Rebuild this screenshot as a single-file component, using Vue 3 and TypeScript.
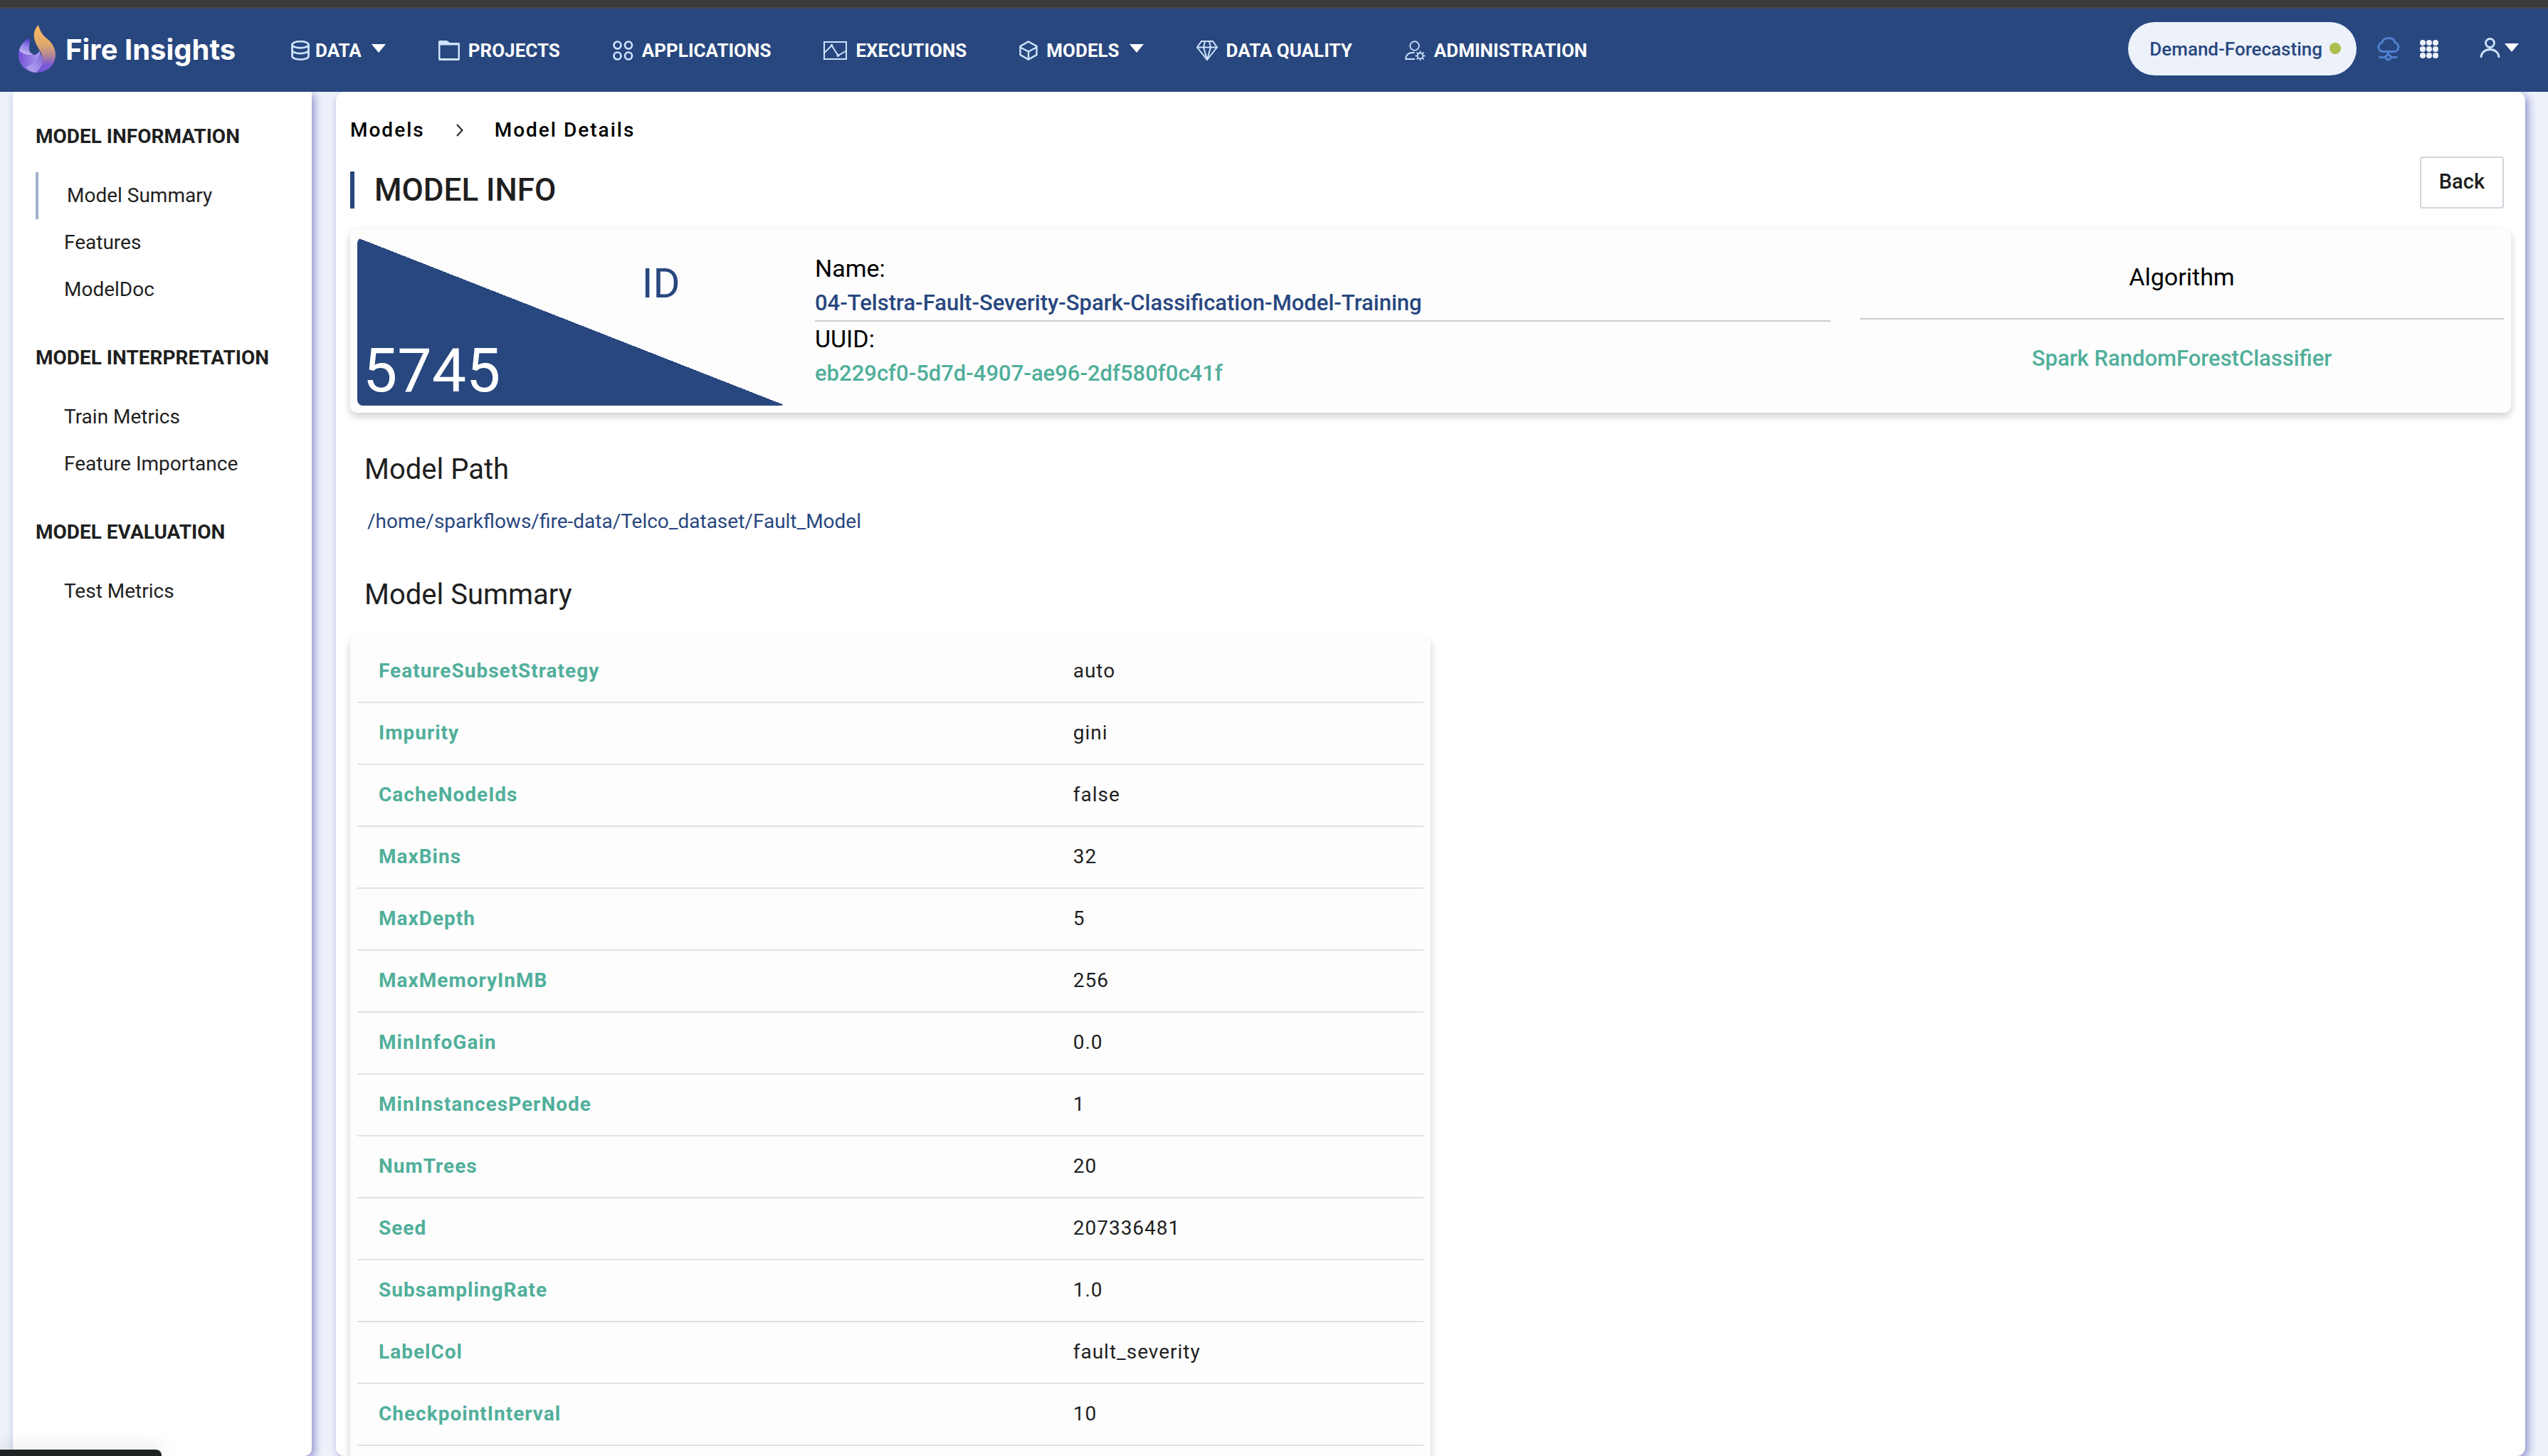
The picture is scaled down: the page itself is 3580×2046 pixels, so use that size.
<script setup lang="ts">
interface NavItem {
  label: string
  icon: string
  menu?: boolean
}

interface SideGroup {
  title: string
  items: string[]
}

const navItems: NavItem[] = [
  { label: 'DATA', icon: 'database', menu: true },
  { label: 'PROJECTS', icon: 'folder' },
  { label: 'APPLICATIONS', icon: 'apps' },
  { label: 'EXECUTIONS', icon: 'chart' },
  { label: 'MODELS', icon: 'cube', menu: true },
  { label: 'DATA QUALITY', icon: 'diamond' },
  { label: 'ADMINISTRATION', icon: 'admin' }
]

const sideGroups: SideGroup[] = [
  { title: 'MODEL INFORMATION', items: ['Model Summary', 'Features', 'ModelDoc'] },
  { title: 'MODEL INTERPRETATION', items: ['Train Metrics', 'Feature Importance'] },
  { title: 'MODEL EVALUATION', items: ['Test Metrics'] }
]

const activeItem = 'Model Summary'

const summary: [string, string][] = [
  ['FeatureSubsetStrategy', 'auto'],
  ['Impurity', 'gini'],
  ['CacheNodeIds', 'false'],
  ['MaxBins', '32'],
  ['MaxDepth', '5'],
  ['MaxMemoryInMB', '256'],
  ['MinInfoGain', '0.0'],
  ['MinInstancesPerNode', '1'],
  ['NumTrees', '20'],
  ['Seed', '207336481'],
  ['SubsamplingRate', '1.0'],
  ['LabelCol', 'fault_severity'],
  ['CheckpointInterval', '10']
]

const gearTeeth = [0, 45, 90, 135, 180, 225, 270, 315]
const gridDots = [4, 13, 22]
</script>

<template>
  <div class="app">
    <div class="window-edge"></div>
    <header class="topbar">
      <a class="brand" href="#">
        <svg class="brand-mark" width="52" height="67" viewBox="0 0 52 67" aria-hidden="true">
          <defs>
            <linearGradient id="flame" x1="0" y1="0" x2="0" y2="1">
              <stop offset="0" stop-color="#fbba5c" />
              <stop offset="0.42" stop-color="#dfa86e" />
              <stop offset="0.62" stop-color="#b88a92" />
              <stop offset="0.84" stop-color="#7b5ad6" />
              <stop offset="1" stop-color="#7552d6" />
            </linearGradient>
            <linearGradient id="leaf" x1="0.6" y1="0" x2="0.3" y2="1">
              <stop offset="0" stop-color="#5138d2" />
              <stop offset="0.4" stop-color="#8a76e2" />
              <stop offset="1" stop-color="#c7bff5" />
            </linearGradient>
            <linearGradient id="fold" x1="0" y1="0" x2="1" y2="0">
              <stop offset="0" stop-color="#7550d8" />
              <stop offset="1" stop-color="#b3a6f0" />
            </linearGradient>
            <linearGradient id="base" x1="0" y1="1" x2="1" y2="0">
              <stop offset="0" stop-color="#b9adf2" />
              <stop offset="1" stop-color="#8466dc" />
            </linearGradient>
          </defs>
          <path d="M15 19C5 24 0 33 0 43c0 13 11 24 25 24 5-5 8-10 9-17l-5-14c-1 4-4 6-7 6-5 0-7-5-7-10 0-5 1-9 0-13z" fill="url(#fold)" />
          <path d="M15 19C7 23 2 29 1 36c4 4 9 6 14 6 2 0 4 0 6-1-5-1-7-5-7-10s2-8 1-12z" fill="url(#leaf)" />
          <path d="M11 59c9-3 16-9 19-20 3 4 4 8 4 12-1 6-4 11-9 16-6-1-11-4-14-8z" fill="url(#base)" />
          <path d="M28 0c-5 5-7 11-6 18 1 7 5 13 9 20 5 10 4 19-6 29 16 0 27-11 27-25 0-9-4-16-11-22C33 14 30 8 28 0z" fill="url(#flame)" />
        </svg>
        <span class="brand-name">Fire Insights</span>
      </a>

      <nav class="main-nav" aria-label="Main">
        <a v-for="item in navItems" :key="item.label" class="nav-item" :class="item.icon" href="#">
          <svg v-if="item.icon === 'database'" class="line" width="26" height="28" viewBox="0 0 26 28" stroke-width="2.8">
            <ellipse cx="13" cy="5.800" rx="11.500" ry="4.600" />
            <path d="M1.500 6v16c0 2.600 5 4.600 11.500 4.600S24.500 24.600 24.500 22V6" />
            <path d="M1.500 13.500c0 2.600 5 4.600 11.500 4.600s11.500-2 11.500-4.600" />
          </svg>
          <svg v-else-if="item.icon === 'folder'" width="30" height="28" viewBox="0 0 30 28">
            <path fill="#cfe3fd" fill-rule="evenodd" d="M2 0h10l4 3h12a2 2 0 0 1 2 2v21a2 2 0 0 1-2 2H2a2 2 0 0 1-2-2V2a2 2 0 0 1 2-2zm.500 6.500V25h25V6.500z" />
          </svg>
          <svg v-else-if="item.icon === 'apps'" class="line" width="29" height="28" viewBox="0 0 29 28" stroke-width="2.6">
            <circle cx="6.500" cy="6.500" r="5" /><circle cx="22" cy="6.500" r="5" />
            <circle cx="6.500" cy="21.500" r="5" /><circle cx="22" cy="21.500" r="5" />
          </svg>
          <svg v-else-if="item.icon === 'chart'" class="line" width="33" height="26" viewBox="0 0 33 26" stroke-width="2">
            <rect x="1" y="1" width="31" height="24" />
            <path d="M1 16.500L11.500 6l9 14L32 13.500" />
            <circle cx="11.500" cy="6" r="1" /><circle cx="20.500" cy="20" r="1" />
          </svg>
          <svg v-else-if="item.icon === 'cube'" class="line" width="26" height="28" viewBox="0 0 26 28" stroke-width="2.4">
            <path d="M13 1.500l11.500 6.500v12L13 26.500 1.500 20V8z" />
            <path d="M1.500 9.500L13 15.500l11.500-6M13 15.500v11" />
          </svg>
          <svg v-else-if="item.icon === 'diamond'" class="line" width="30" height="28" viewBox="0 0 30 28" stroke-width="2">
            <path d="M7 1h16l6 8.500L15 27 1 9.500z" />
            <path d="M1 9.500h28M12 1l-2 8.500L15 27l5-17.500L18 1" />
          </svg>
          <svg v-else class="line" width="29" height="28" viewBox="0 0 29 28" stroke-width="1.8">
            <circle cx="13.500" cy="7.500" r="6.300" />
            <path d="M13.500 17H11C5 17 1.500 20 1 26h13" />
            <circle cx="21.500" cy="21.500" r="3.800" />
            <path v-for="a in gearTeeth" :key="a" d="M21.500 17.500v-3" :transform="`rotate(${a} 21.5 21.5)`" />
          </svg>
          <span>{{ item.label }}</span>
          <svg v-if="item.menu" class="caret" width="20" height="12" viewBox="0 0 20 12"><path d="M0 0h20L10 12z" fill="#fff" /></svg>
        </a>
      </nav>

      <div class="tools">
        <button class="project-pill" type="button">
          <span>Demand-Forecasting</span>
          <i class="status-dot"></i>
        </button>
        <button class="icon-button" type="button" aria-label="Connection">
          <svg width="33" height="34" viewBox="0 0 33 34" fill="none" stroke="#4f80cf" stroke-width="3">
            <path d="M8.500 20.500h16a6.500 6.500 0 0 0 1.500-12.800C25 4 21.500 1.600 17 1.600S9 4 8 7.700A6.500 6.500 0 0 0 8.500 20.500z" />
            <path d="M16.500 20.500v4.500M3.500 28.500h9.500M20 28.500h9.500" />
            <circle cx="16.500" cy="28.500" r="3.400" />
          </svg>
        </button>
        <button class="icon-button" type="button" aria-label="Apps">
          <svg width="26" height="26" viewBox="0 0 26 26" fill="#ecf1fa">
            <template v-for="y in gridDots" :key="y">
              <circle v-for="x in gridDots" :key="x" :cx="x" :cy="y" r="4" />
            </template>
          </svg>
        </button>
        <button class="icon-button account" type="button" aria-label="Account">
          <svg width="29" height="28" viewBox="0 0 29 28" fill="none" stroke="#cfe3fd" stroke-width="2.8">
            <circle cx="14.500" cy="7.500" r="6" />
            <path d="M2 28c0-7 5.500-11.500 12.500-11.500S27 21 27 28" />
          </svg>
          <svg width="20" height="12" viewBox="0 0 20 12"><path d="M0 0h20L10 12z" fill="#fff" /></svg>
        </button>
      </div>
    </header>

    <div class="content">
      <aside class="sidebar">
        <section v-for="group in sideGroups" :key="group.title">
          <h2>{{ group.title }}</h2>
          <a v-for="item in group.items" :key="item" href="#" :class="{ active: item === activeItem }">{{ item }}</a>
        </section>
      </aside>

      <main class="panel">
        <nav class="breadcrumb" aria-label="Breadcrumb">
          <a href="#">Models</a>
          <svg width="10" height="18" viewBox="0 0 10 18" fill="none" stroke="#222" stroke-width="2"><path d="M1 1l7.500 8L1 17" /></svg>
          <a href="#">Model Details</a>
        </nav>

        <div class="title-row">
          <h1>MODEL INFO</h1>
          <button class="back" type="button">Back</button>
        </div>

        <section class="info-card">
          <div class="id-box">
            <span class="id-label">ID</span>
            <span class="id-value">5745</span>
          </div>
          <div class="names">
            <div class="label">Name:</div>
            <div class="value model-name">04-Telstra-Fault-Severity-Spark-Classification-Model-Training</div>
            <div class="label">UUID:</div>
            <div class="value">eb229cf0-5d7d-4907-ae96-2df580f0c41f</div>
          </div>
          <div class="algorithm">
            <div class="label">Algorithm</div>
            <div class="value">Spark RandomForestClassifier</div>
          </div>
        </section>

        <h3 class="path-title">Model Path</h3>
        <p class="path">/home/sparkflows/fire-data/Telco_dataset/Fault_Model</p>

        <h3 class="summary-title">Model Summary</h3>
        <div class="table-card">
          <table>
            <tbody>
              <tr v-for="[name, value] in summary" :key="name">
                <th scope="row">{{ name }}</th>
                <td>{{ value }}</td>
              </tr>
            </tbody>
          </table>
        </div>
      </main>
    </div>

    <div class="link-status"></div>
  </div>
</template>

<style>
body {
  background: #ecf1fa;
}
</style>

<style scoped>
* {
  box-sizing: border-box;
}

.app {
  display: flex;
  flex-direction: column;
  height: 100vh;
  overflow: hidden;
  font-family: Roboto, sans-serif;
  font-size: 28px;
  color: #1f1f1f;
}

a {
  color: inherit;
  text-decoration: none;
}

button {
  font: inherit;
  color: inherit;
  cursor: pointer;
}

h1,
h2,
h3,
p {
  margin: 0;
}

svg {
  display: block;
  flex: none;
}

.window-edge {
  flex: none;
  height: 12px;
  background: #3b3b3b;
  border-bottom: 2px solid #474747;
}

.topbar {
  position: relative;
  z-index: 1;
  flex: none;
  display: flex;
  align-items: center;
  height: 117px;
  padding: 0 41px 0 26px;
  background: #28477f;
}

.brand {
  display: flex;
  align-items: center;
  gap: 14px;
  width: 383px;
  padding-bottom: 5px;
}

.brand-name {
  color: #fff;
  font-family: Inter, sans-serif;
  font-size: 40px;
  font-weight: 700;
  line-height: 48px;
  padding-top: 4px;
}

.main-nav {
  display: flex;
  align-items: center;
  gap: 74px;
}

.nav-item {
  display: flex;
  align-items: center;
  gap: 12px;
  color: #fff;
  font-size: 26px;
  font-weight: 700;
  line-height: 32px;
}

.nav-item.database {
  gap: 8px;
}

.line {
  fill: none;
  stroke: #cfe3fd;
}

.caret {
  margin: 0 0 6px 2px;
}

.database .caret {
  margin-left: 6px;
}

.tools {
  display: flex;
  align-items: center;
  gap: 28px;
  margin-left: auto;
  padding-bottom: 4px;
}

.project-pill {
  display: flex;
  align-items: center;
  gap: 10px;
  height: 75px;
  padding: 0 22px 0 30px;
  border: 0;
  border-radius: 38px;
  background: #ecf1fa;
  color: #28477f;
  font-size: 26px;
  font-weight: 500;
}

.status-dot {
  width: 16px;
  height: 16px;
  margin-bottom: 2px;
  border-radius: 50%;
  background: #adbd50;
}

.icon-button {
  display: flex;
  align-items: center;
  padding: 0;
  border: 0;
  background: none;
}

.account {
  gap: 6px;
  margin: 0 0 4px 30px;
}

.content {
  flex: 1;
  min-height: 0;
  display: flex;
  gap: 34px;
  padding: 0 32px 0 18px;
  background: #ecf1fa;
}

.sidebar,
.panel {
  background: #fff;
  box-shadow: 4px 4px 12px #9190cd;
}

.sidebar {
  flex: none;
  width: 420px;
  padding: 46px 0 0 32px;
  border-radius: 0 0 10px 10px;
}

.sidebar h2 {
  margin-bottom: 33px;
  font-size: 28px;
  font-weight: 700;
  line-height: 34px;
}

.sidebar section {
  margin-bottom: 46px;
}

.sidebar a {
  display: block;
  padding-left: 40px;
  line-height: 66px;
}

.sidebar a.active {
  border-left: 4px solid #9fb1c9;
}

.panel {
  flex: 1;
  min-width: 0;
  padding: 36px 20px 0;
  border-radius: 12px;
  overflow: hidden;
}

.breadcrumb {
  display: flex;
  align-items: center;
  gap: 44px;
  color: #000;
  font-weight: 500;
  line-height: 36px;
  letter-spacing: 2px;
}

.title-row {
  display: flex;
  align-items: flex-end;
  justify-content: space-between;
  margin: 19px 10px 29px 0;
}

.title-row h1 {
  padding-left: 28px;
  border-left: 6px solid #28477f;
  font-size: 44px;
  font-weight: 500;
  line-height: 52px;
}

.back {
  height: 73px;
  padding: 0 25px 3px;
  border: 2px solid #cfd6dc;
  border-radius: 4px;
  background: #fff;
  font-size: 29px;
  font-weight: 500;
}

.info-card {
  display: grid;
  grid-template-columns: 602fr 1427fr 905fr;
  column-gap: 41px;
  padding: 12px 10px 10px;
  border-radius: 10px;
  background: #fdfdfd;
  box-shadow: 0 5px 12px rgba(0, 0, 0, 0.2);
}

.id-box {
  display: flex;
  flex-direction: column;
  justify-content: space-between;
  height: 236px;
  padding: 32px 0 7px 8px;
  border-radius: 8px;
  background: linear-gradient(to top right, #28477f 50%, transparent 50%);
}

.id-label {
  align-self: flex-end;
  margin-right: 25%;
  color: #28477f;
  font-size: 58px;
  line-height: 64px;
}

.id-value {
  color: #fff;
  font-size: 86px;
  line-height: 84px;
}

.label {
  color: #000;
  font-size: 34px;
  line-height: 48px;
}

.value {
  padding-top: 1px;
  color: #51af9b;
  font-size: 31px;
  font-weight: 500;
  line-height: 48px;
}

.names {
  padding-top: 19px;
}

.model-name {
  border-bottom: 2px solid #ccc;
  color: #28477f;
}

.algorithm {
  text-align: center;
}

.algorithm .label {
  padding: 31px 0 34px;
  border-bottom: 2px solid #ccc;
}

.algorithm .value {
  padding-top: 31px;
}

h3 {
  padding-left: 20px;
  font-size: 40px;
  font-weight: 400;
  line-height: 48px;
}

.path-title {
  margin-top: 56px;
}

.path {
  margin-top: 29px;
  padding-left: 24px;
  color: #28477f;
  line-height: 40px;
}

.summary-title {
  margin-top: 59px;
}

.table-card {
  width: 50%;
  margin-top: 31px;
  padding: 10px 10px 40px;
  background: #fdfdfd;
  border-radius: 10px;
  box-shadow: 0 8px 12px rgba(0, 0, 0, 0.2);
}

table {
  width: 100%;
  border-collapse: separate;
  border-spacing: 0;
  table-layout: fixed;
  letter-spacing: 1px;
}

th,
td {
  height: 87px;
  padding: 0 0 2px 30px;
  border-bottom: 2px solid #dee2e6;
  text-align: left;
}

td {
  padding-left: 32px;
}

th {
  width: 65%;
  color: #51af9b;
  font-weight: 700;
}

.link-status {
  position: fixed;
  left: 0;
  bottom: 0;
  z-index: 2;
  width: 227px;
  height: 9px;
  border-radius: 0 8px 0 0;
  background: #1f2222;
  box-shadow: 0 0 28px rgba(0, 0, 0, 0.2);
}
</style>
